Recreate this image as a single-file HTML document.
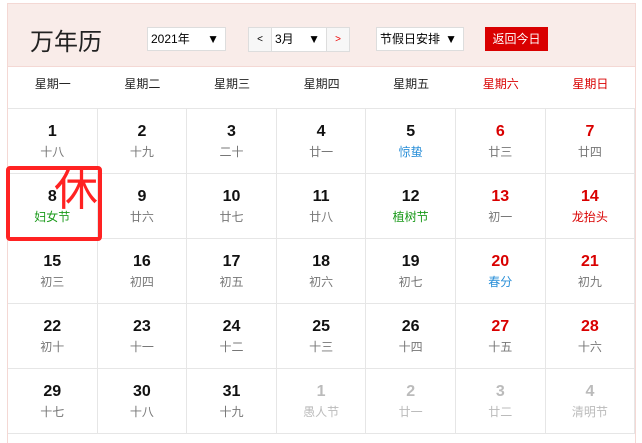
<!DOCTYPE html>
<html><head><meta charset="utf-8"><style>
*{margin:0;padding:0;box-sizing:border-box}
body{width:642px;height:440px;background:#fff;font-family:"Liberation Sans","Noto Sans CJK SC",sans-serif;position:relative;overflow:hidden}
.wrap{position:absolute;left:7px;top:3px;width:629px;height:440px;border:1px solid #f4d8d4;border-bottom:none}
.hd{position:absolute;left:0;top:0;width:627px;height:63px;background:#f9ece9;border-bottom:1px solid #f4d8d4}
.title{position:absolute;left:22px;top:18px;font-size:24px;color:#222}
.sel{position:absolute;top:23px;height:24px;background:#fff;border:1px solid #ddd;font-size:12px;line-height:22px;padding-left:3px;color:#000}
.sel i{position:absolute;right:6px;top:0;font-style:normal;font-size:12px}
.btn{position:absolute;top:23px;height:25px;background:#f7f7f7;border:1px solid #ddd;font-size:10px;line-height:23px;text-align:center}
.today{position:absolute;left:477px;top:23px;width:63px;height:24px;background:#d90000;color:#fff;font-size:12px;line-height:24px;text-align:center}
.wk{position:absolute;top:63px;height:42px;width:89.6px;text-align:center;font-size:12px;line-height:42px;color:#222}
.cell{position:absolute;width:89.6px;height:65px;border-right:1px solid #e6e6e6;border-top:1px solid #e6e6e6;text-align:center}
.n{font-size:16px;font-weight:bold;margin-top:13px;height:20px;line-height:20px;color:#111}
.l{font-size:12px;margin-top:2px;color:#777;line-height:16px}
.r .n{color:#d90000}
.g .n,.g .l{color:#bbb}
.box{position:absolute;left:6px;top:166px;width:96px;height:75px;border:4px solid #f22;border-radius:4px}
.xiu{position:absolute;left:54px;top:166px;font-size:44px;color:#f22;line-height:50px}
</style></head><body>
<div class="wrap">
<div class="hd">
<div class="title">万年历</div>
<div class="sel" style="left:139px;width:79px">2021年<i>▼</i></div>
<div class="btn" style="left:240px;width:24px">&lt;</div>
<div class="sel" style="left:263px;width:56px;height:25px">3月<i>▼</i></div>
<div class="btn" style="left:318px;width:24px;color:#e00">&gt;</div>
<div class="sel" style="left:368px;width:88px">节假日安排<i>▼</i></div>
<div class="today">返回今日</div>
</div>
</div>
<div id="g"></div>
<script>
var w=["星期一","星期二","星期三","星期四","星期五","星期六","星期日"];
var d=[["1","十八"],["2","十九"],["3","二十"],["4","廿一"],["5","惊蛰","b"],["6","廿三"],["7","廿四"],
["8","妇女节","gr"],["9","廿六"],["10","廿七"],["11","廿八"],["12","植树节","gr"],["13","初一"],["14","龙抬头","rd"],
["15","初三"],["16","初四"],["17","初五"],["18","初六"],["19","初七"],["20","春分","b"],["21","初九"],
["22","初十"],["23","十一"],["24","十二"],["25","十三"],["26","十四"],["27","十五"],["28","十六"],
["29","十七"],["30","十八"],["31","十九"],["1","愚人节","x"],["2","廿一","x"],["3","廿二","x"],["4","清明节","x"]];
var h="";
for(var i=0;i<7;i++)h+='<div class="wk" style="left:'+(8+i*89.6)+'px;'+(i>4?'color:#d90000':'')+'">'+w[i]+'</div>';
for(var k=0;k<35;k++){var c=k%7,r=Math.floor(k/7),e=d[k];
var cls="cell"+(c>4?" r":"")+(e[2]=="x"?" g":"");
var lc=e[2]=="b"?"color:#2a8fd8":e[2]=="gr"?"color:#1a9a1a":e[2]=="rd"?"color:#d90000":"";
h+='<div class="'+cls+'" style="left:'+(8+c*89.6)+'px;top:'+(108+r*65)+'px"><div class="n">'+e[0]+'</div><div class="l" style="'+lc+'">'+e[1]+'</div></div>';}
h+='<div style="position:absolute;left:8px;top:433px;width:627px;border-top:1px solid #e6e6e6"></div>';
h+='<div class="box"></div><div class="xiu">休</div>';
document.getElementById("g").innerHTML=h;
</script>
</body></html>
